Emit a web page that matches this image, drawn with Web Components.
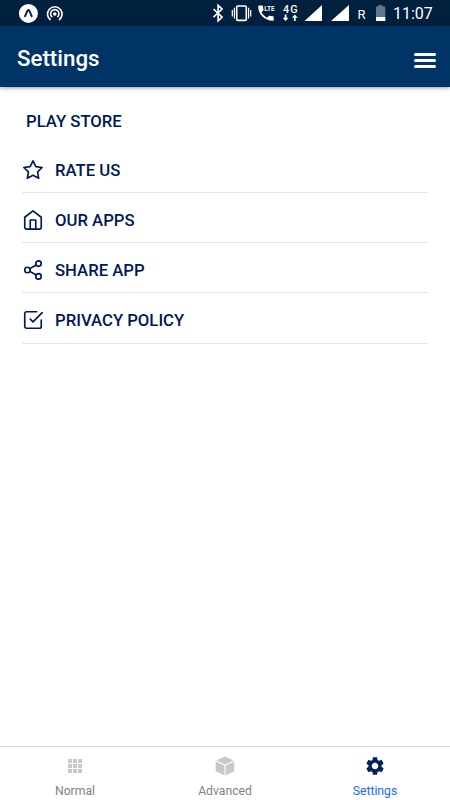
<!DOCTYPE html>
<html lang="en">
<head>
<meta charset="utf-8">
<meta name="viewport" content="width=device-width, initial-scale=1">
<title>Settings</title>
<style>
	html, body {
		margin: 0;
		height: 100%;
		overflow: hidden;
		background: #fff;
		font-family: Roboto, "Liberation Sans", sans-serif;
	}
</style>
</head>
<body>
<settings-app></settings-app>

<script>
const ICONS = {
	star: '<polygon points="12 2 15.09 8.26 22 9.27 17 14.14 18.18 21.02 12 17.77 5.82 21.02 7 14.14 2 9.27 8.91 8.26 12 2"/>',
	home: '<path d="M3 9l9-7 9 7v11a2 2 0 0 1-2 2H5a2 2 0 0 1-2-2z"/><polyline points="9 22 9 12 15 12 15 22"/>',
	share: '<circle cx="18" cy="5" r="3"/><circle cx="6" cy="12" r="3"/><circle cx="18" cy="19" r="3"/><path d="M8.59 13.51l6.83 3.98M15.41 6.51l-6.82 3.98"/>',
	check: '<polyline points="9 11 12 14 22 4"/><path d="M21 12v7a2 2 0 0 1-2 2H5a2 2 0 0 1-2-2V5a2 2 0 0 1 2-2h11"/>'
};

const TAB_ICONS = {
	grid: '<path d="M4.4 4.4h4.3v4.3H4.4zM9.9 4.4h4.3v4.3H9.9zM15.4 4.4h4.3v4.3h-4.3zM4.4 9.9h4.3v4.3H4.4zM9.9 9.9h4.3v4.3H9.9zM15.4 9.9h4.3v4.3h-4.3zM4.4 15.4h4.3v4.3H4.4zM9.9 15.4h4.3v4.3H9.9zM15.4 15.4h4.3v4.3h-4.3z"/>',
	cube: '<path d="M12 1.6L21.4 6 12 10.3 2.6 6zM1.8 7.2L11.4 11.5V22.3L1.8 17.6zM22.2 7.2L12.6 11.5V22.3L22.2 17.6z"/>',
	gear: '<path d="M19.14 12.94c.04-.3.06-.61.06-.94 0-.32-.02-.64-.07-.94l2.03-1.58c.18-.14.23-.41.12-.61l-1.92-3.32c-.12-.22-.37-.29-.59-.22l-2.39.96c-.5-.38-1.03-.7-1.62-.94l-.36-2.54c-.04-.24-.24-.41-.48-.41h-3.84c-.24 0-.43.17-.47.41l-.36 2.54c-.59.24-1.13.57-1.62.94l-2.39-.96c-.22-.08-.47 0-.59.22L2.74 8.87c-.12.21-.08.47.12.61l2.03 1.58c-.05.3-.09.63-.09.94s.02.64.07.94l-2.03 1.58c-.18.14-.23.41-.12.61l1.92 3.32c.12.22.37.29.59.22l2.39-.96c.5.38 1.03.7 1.62.94l.36 2.54c.05.24.24.41.48.41h3.84c.24 0 .44-.17.47-.41l.36-2.54c.59-.24 1.13-.56 1.62-.94l2.39.96c.22.08.47 0 .59-.22l1.92-3.32c.12-.22.07-.47-.12-.61l-2.01-1.58zM12 15.6c-1.98 0-3.6-1.62-3.6-3.6s1.62-3.6 3.6-3.6 3.6 1.62 3.6 3.6-1.62 3.6-3.6 3.6z"/>'
};

class StatusBar extends HTMLElement {
	constructor() {
		super();
		this.attachShadow({ mode: 'open' });
	}

	connectedCallback() {
		const style = `
			:host {
				display: flex;
				height: 26px;
				flex: none;
				box-sizing: border-box;
				padding: 0 17px 0 18px;
				background: #00203d;
				color: #fff;
			}
			svg {
				display: block;
				height: 26px;
				flex: none;
				fill: #fff;
			}
			.line {
				fill: none;
				stroke: #fff;
			}
			.left, .right {
				display: flex;
			}
			.left {
				gap: 8px;
			}
			.right {
				margin-left: auto;
			}
			text {
				font-family: Roboto, sans-serif;
			}
			.time {
				width: 40px;
				margin-left: 7px;
				font-size: 16px;
				line-height: 28px;
				white-space: nowrap;
			}
		`;

		// Every icon is drawn on the bar's own 26px height
		this.shadowRoot.innerHTML = `<style>${style}</style>
			<div class="left">
				<svg width="20" viewBox="18 0 20 26"><circle cx="28.4" cy="13.4" r="9.5"/><path d="M24.6 16.8c1.7-2 2.3-6.8 3.8-6.8s2.1 4.8 3.8 6.8" fill="none" stroke="#00203d" stroke-width="1.9"/></svg>
				<svg width="18" viewBox="46 0 18 26">
					<g class="line" stroke-width="1.6"><path d="M50.6 20A7.3 7.3 0 1 1 59 20"/><path d="M52.3 17.2A4.2 4.2 0 1 1 57.3 17.2"/></g>
					<circle cx="54.8" cy="14" r="1.8"/>
				</svg>
			</div>
			<div class="right">
				<svg width="14" viewBox="211 0 14 26"><path class="line" stroke-width="1.6" d="M213.5 9l8.6 8.1-4 3.7V5.4l4 3.7-8.6 8.1"/></svg>
				<svg width="31" viewBox="225 0 31 26"><g class="line" stroke-width="1.6"><rect x="236.7" y="6" width="9.6" height="14.4" rx="1"/><path stroke-width="1.2" d="M234.4 7.8v10.8M232.3 10v6.4M248.6 7.8v10.8M250.7 10v6.4"/></g></svg>
				<svg width="23" viewBox="256 0 23 26">
					<path d="M259 5.5h3.2c.5 0 .8.3.8.8 0 1.1.2 2.2.5 3.2.1.3 0 .6-.2.9l-1.8 1.9c1.3 2.4 3 4.1 5.4 5.4l1.9-1.8c.2-.2.5-.3.8-.2 1 .3 2.1.5 3.3.5.5 0 .8.3.8.8v3c0 .5-.3.8-.8.8C264.6 20.8 258.2 14.4 258.2 6.3c0-.5.3-.8.8-.8z"/>
					<text x="264.3" y="10.9" font-size="7.8" font-weight="700" textLength="10.3" lengthAdjust="spacingAndGlyphs">LTE</text>
				</svg>
				<svg width="24" viewBox="279 0 24 26">
					<text x="283" y="13" font-size="10.8" font-weight="500" textLength="14.6">4G</text>
					<path d="M284.7 14.5h1.8v3.2h2l-2.9 3.3-2.9-3.3h2zM293.9 21h1.8v-3.2h2l-2.9-3.3-2.9 3.3h2z"/>
				</svg>
				<svg width="25" viewBox="303 0 25 26"><path d="M304.5 21L322 5v16z"/></svg>
				<svg width="26" viewBox="328 0 26 26"><path d="M331 21L349 5v16z"/></svg>
				<svg width="16" viewBox="354 0 16 26"><text x="357.5" y="19" font-size="13">R</text></svg>
				<svg width="16" viewBox="370 0 16 26"><path fill="#63778c" d="M378.3 5h4v1.6h3V17H376V6.6h2.3z"/><path d="M376 17h9.3v4H376z"/></svg>
				<div class="time">11:07</div>
			</div>`;
	}
}

class AppHeader extends HTMLElement {
	constructor() {
		super();
		this.attachShadow({ mode: 'open' });
	}

	connectedCallback() {
		const style = `
			:host {
				display: flex;
				flex: none;
				align-items: center;
				justify-content: space-between;
				height: 61px;
				box-sizing: border-box;
				padding: 3px 14px 0 17px;
				background: #003366;
				color: #fff;
				box-shadow: 0 1px 4px rgba(0,0,0,0.4);
			}
			.title {
				font-size: 22.3px;
				font-weight: 500;
				line-height: 27px;
			}
			.menu {
				display: grid;
				gap: 3px;
				width: 22px;
				padding-top: 4px;
			}
			.menu i {
				height: 3px;
				border-radius: 1.5px;
				background: #fff;
			}
		`;
		this.shadowRoot.innerHTML = `<style>${style}</style>
			<div class="title"><slot></slot></div>
			<div class="menu"><i></i><i></i><i></i></div>`;
	}
}

class SettingsRow extends HTMLElement {
	constructor() {
		super();
		this.attachShadow({ mode: 'open' });
	}

	connectedCallback() {
		const style = `
			:host {
				display: flex;
				align-items: center;
				gap: 11px;
				height: 50.2px;
				box-sizing: border-box;
				padding-top: 5px;
				border-bottom: 1px solid #e4e4e4;
				color: #001858;
				font-size: 16.7px;
				font-weight: 500;
			}
			span {
				padding-top: 2px;
				line-height: 20px;
			}
			svg {
				width: 22px;
				height: 22px;
				fill: none;
				stroke: currentColor;
				stroke-width: 1.8;
				stroke-linecap: round;
				stroke-linejoin: round;
			}
		`;
		this.shadowRoot.innerHTML = `<style>${style}</style>
			<svg viewBox="0 0 24 24">${ICONS[this.getAttribute('icon')]}</svg>
			<span><slot></slot></span>`;
	}
}

class TabItem extends HTMLElement {
	constructor() {
		super();
		this.attachShadow({ mode: 'open' });
	}

	connectedCallback() {
		const style = `
			:host {
				display: flex;
				flex: 1;
				flex-direction: column;
				align-items: center;
				color: #828282;
				font-size: 12.2px;
				line-height: 16px;
			}
			:host([active]) {
				color: #1a6af5;
			}
			svg {
				width: 22px;
				height: 22px;
				margin: 8px 0 6px;
				fill: #c8c8c8;
			}
			:host([active]) svg {
				fill: #002459;
			}
		`;
		this.shadowRoot.innerHTML = `<style>${style}</style>
			<svg viewBox="0 0 24 24">${TAB_ICONS[this.getAttribute('icon')]}</svg>
			<span><slot></slot></span>`;
	}
}

class SettingsApp extends HTMLElement {
	constructor() {
		super();
		this.attachShadow({ mode: 'open' });
	}

	connectedCallback() {
		const style = `
			:host {
				display: flex;
				flex-direction: column;
				height: 100vh;
			}
			main {
				flex: 1;
				padding: 23px 22px 0;
			}
			h2 {
				margin: 0 0 9.8px 4px;
				height: 23px;
				color: #001858;
				font-size: 16.7px;
				font-weight: 500;
				line-height: 23px;
			}
			nav {
				display: flex;
				flex: none;
				height: 54px;
				box-sizing: border-box;
				border-top: 1px solid #dcdcdc;
			}
		`;
		this.shadowRoot.innerHTML = `<style>${style}</style>
			<status-bar></status-bar>
			<app-header>Settings</app-header>
			<main>
				<h2>PLAY STORE</h2>
				<settings-row icon="star">RATE US</settings-row>
				<settings-row icon="home">OUR APPS</settings-row>
				<settings-row icon="share">SHARE APP</settings-row>
				<settings-row icon="check">PRIVACY POLICY</settings-row>
			</main>
			<nav>
				<tab-item icon="grid">Normal</tab-item>
				<tab-item icon="cube">Advanced</tab-item>
				<tab-item icon="gear" active>Settings</tab-item>
			</nav>`;
	}
}

customElements.define('status-bar', StatusBar);
customElements.define('app-header', AppHeader);
customElements.define('settings-row', SettingsRow);
customElements.define('tab-item', TabItem);
customElements.define('settings-app', SettingsApp);
</script>
</body>
</html>
